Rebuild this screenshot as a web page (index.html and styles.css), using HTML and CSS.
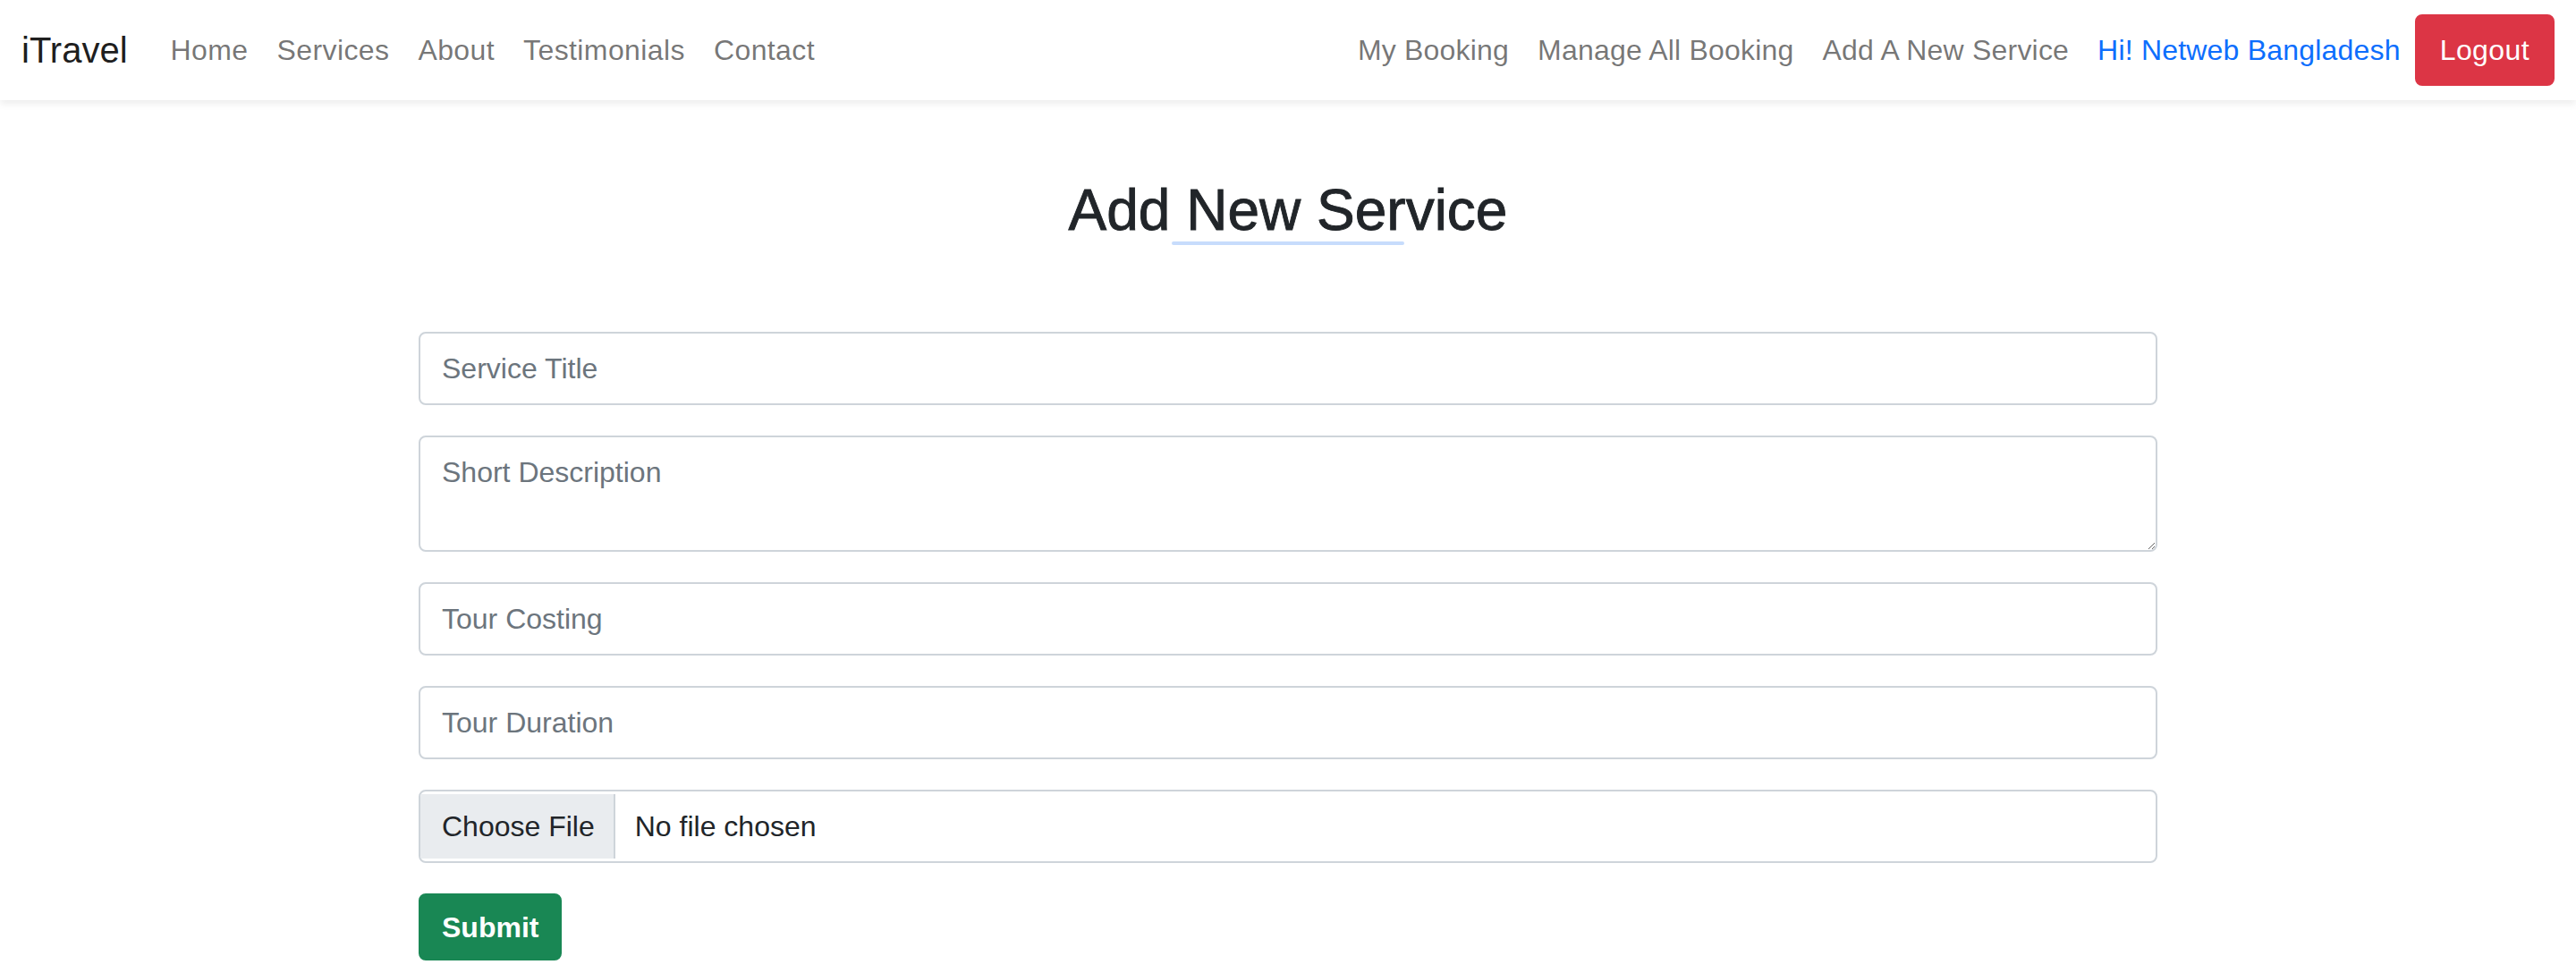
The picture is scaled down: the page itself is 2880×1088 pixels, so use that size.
FILE: index.html
```html
<!DOCTYPE html>
<html lang="en">
<head>
<meta charset="utf-8">
<title>iTravel - Add New Service</title>
<link rel="stylesheet" href="styles.css">
</head>
<body>
<nav class="navbar">
  <a class="brand" href="#">iTravel</a>
  <ul class="nav nav-left">
    <li><a class="nav-link" href="#">Home</a></li>
    <li><a class="nav-link" href="#">Services</a></li>
    <li><a class="nav-link" href="#">About</a></li>
    <li><a class="nav-link" href="#">Testimonials</a></li>
    <li><a class="nav-link" href="#">Contact</a></li>
  </ul>
  <ul class="nav nav-right">
    <li><a class="nav-link" href="#">My Booking</a></li>
    <li><a class="nav-link" href="#">Manage All Booking</a></li>
    <li><a class="nav-link" href="#">Add A New Service</a></li>
    <li><a class="nav-link user" href="#">Hi! Netweb Bangladesh</a></li>
    <li><button class="btn btn-logout" type="button">Logout</button></li>
  </ul>
</nav>

<main class="page">
  <h2 class="title">Add New Service</h2>
  <div class="title-line"></div>

  <form class="service-form">
    <input class="field" type="text" placeholder="Service Title">
    <textarea class="field area" placeholder="Short Description"></textarea>
    <input class="field" type="text" placeholder="Tour Costing">
    <input class="field" type="text" placeholder="Tour Duration">
    <label class="field file">
      <span class="file-btn">Choose File</span>
      <span class="file-name">No file chosen</span>
    </label>
    <button class="btn btn-submit" type="button">Submit</button>
  </form>
</main>
</body>
</html>
```

FILE: styles.css
```css
* {
  box-sizing: border-box;
}

html, body {
  margin: 0;
  padding: 0;
  background: #ffffff;
}

body {
  font-family: "Liberation Sans", Arial, sans-serif;
  font-size: 32px;
  line-height: 1.5;
  color: #212529;
  overflow: hidden;
}

/* ---------- Navbar ---------- */
.navbar {
  display: flex;
  align-items: center;
  height: 112px;
  padding: 16px 24px;
  background: #ffffff;
  box-shadow: 0 4px 8px rgba(0, 0, 0, 0.075);
  position: relative;
  z-index: 2;
}

.brand {
  font-size: 40px;
  line-height: 60px;
  padding: 10px 0;
  margin-right: 32px;
  color: rgba(0, 0, 0, 0.9);
  text-decoration: none;
}

.nav {
  display: flex;
  align-items: center;
  list-style: none;
  margin: 0;
  padding: 0;
}

.nav-right {
  margin-left: auto;
}

.nav-link {
  display: block;
  padding: 16px 16px;
  line-height: 48px;
  letter-spacing: 0.4px;
  color: rgba(0, 0, 0, 0.55);
  text-decoration: none;
}

.nav-right .nav-link {
  letter-spacing: 0.2px;
}

.nav-link.user {
  color: #0d6efd;
}

.btn {
  font-family: inherit;
  font-size: 32px;
  line-height: 48px;
  border: 2px solid transparent;
  border-radius: 8px;
  padding: 0 24px;
  cursor: pointer;
}

.btn-logout {
  height: 80px;
  padding: 0 26px;
  letter-spacing: 0.4px;
  background: #dc3545;
  border-color: #dc3545;
  color: #ffffff;
}

/* ---------- Page ---------- */
.page {
  padding-top: 88px;
}

.title {
  margin: 0;
  text-align: center;
  font-size: 64px;
  font-weight: 400;
  line-height: 70px;
  color: #212529;
  -webkit-text-stroke: 0.9px #212529;
}

.title-line {
  width: 260px;
  height: 4px;
  margin: 0 auto;
  border-radius: 2px;
  background: #c7dcfc;
}

.service-form {
  width: 1944px;
  margin: 97px auto 0;
  display: flex;
  flex-direction: column;
  align-items: flex-start;
  gap: 34px;
}

.field {
  display: block;
  width: 100%;
  height: 82px;
  margin: 0;
  padding: 15px 24px;
  font-family: inherit;
  font-size: 32px;
  line-height: 48px;
  color: #212529;
  background: #ffffff;
  border: 2px solid #ced4da;
  border-radius: 8px;
  outline: none;
}

.field::placeholder {
  color: #6c757d;
  opacity: 1;
}

.area {
  height: 130px;
  resize: vertical;
}

.file {
  display: flex;
  align-items: center;
  padding: 0;
  overflow: hidden;
}

.file-btn {
  align-self: stretch;
  display: flex;
  align-items: center;
  margin: 3px 0;
  padding: 0 21px 0 24px;
  background: #e9ecef;
  border-right: 2px solid #ced4da;
  color: #212529;
}

.file-name {
  margin-left: 22px;
  color: #212529;
}

.btn-submit {
  height: 75px;
  background: #198754;
  border-color: #198754;
  color: #ffffff;
  font-weight: 700;
}
```
